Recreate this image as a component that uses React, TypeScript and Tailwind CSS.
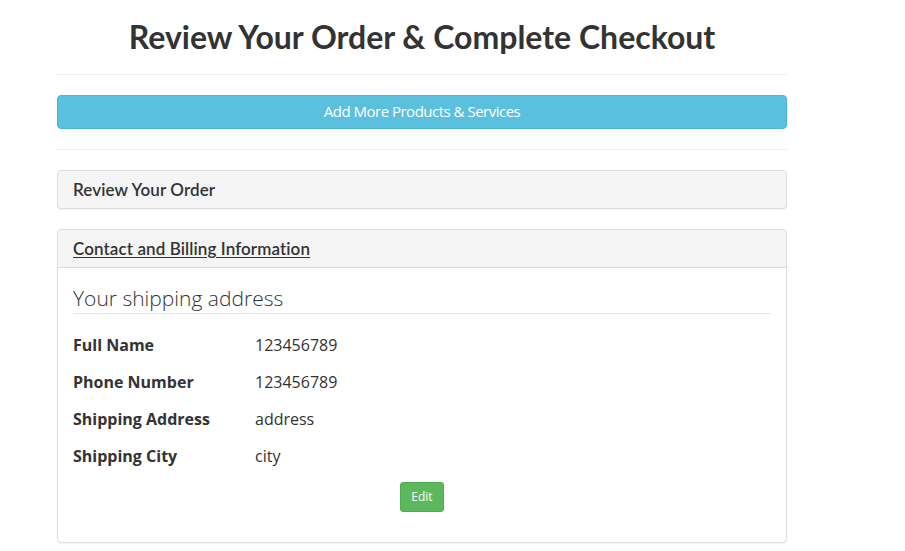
import React from 'react';

const rows = [
  { label: 'Full Name', value: '123456789' },
  { label: 'Phone Number', value: '123456789' },
  { label: 'Shipping Address', value: 'address' },
  { label: 'Shipping City', value: 'city' },
];

const App: React.FC = () => (
  <div className="min-h-screen w-full bg-white font-['Open_Sans',sans-serif] text-[#333]">
    <div className="w-[730px] ml-[57px]">
      <h1 className="pt-[17px] pb-[17px] text-center text-[32px] leading-[40px] font-bold font-['Lato',sans-serif] text-[#333]">
        Review Your Order &amp; Complete Checkout
      </h1>
      <div className="border-t border-[#eee]" />
      <div className="py-5">
        <button className="w-full h-[34px] pb-[2px] rounded bg-[#5bc0de] border border-[#46b8da] text-white text-[15px] tracking-[-0.5px] font-['Liberation_Sans_Narrow','Open_Sans',sans-serif]">
          Add More Products &amp; Services
        </button>
      </div>
      <div className="border-t border-[#eee]" />

      <div className="mt-5 rounded border border-[#ddd] bg-[#f5f5f5] shadow-[0_1px_1px_rgba(0,0,0,0.05)]">
        <div className="h-[37px] px-[15px] flex items-center text-[17px] tracking-[0.1px] font-semibold font-['Lato',sans-serif]">
          Review Your Order
        </div>
      </div>

      <div className="mt-5 rounded border border-[#ddd] bg-white shadow-[0_1px_1px_rgba(0,0,0,0.05)]">
        <div className="h-[38px] px-[15px] flex items-center bg-[#f5f5f5] border-b border-[#ddd] rounded-t text-[17px] tracking-[0.1px] font-semibold underline underline-offset-2 font-['Lato',sans-serif]">
          Contact and Billing Information
        </div>
        <div className="px-[15px] pt-[17px] pb-[30px]">
          <h3 className="text-[21px] leading-[27px] font-light border-b border-[#e5e5e5] pb-[1px]">
            Your shipping address
          </h3>
          <div className="mt-[19px] flex flex-col gap-[13px]">
            {rows.map((r) => (
              <div key={r.label} className="flex text-[16px] leading-6">
                <div className="w-[182px] font-bold">{r.label}</div>
                <div>{r.value}</div>
              </div>
            ))}
          </div>
          <div className="mt-[14px] flex justify-center">
            <button className="h-[30px] px-[10px] rounded-[3px] bg-[#5cb85c] border border-[#4cae4c] text-white text-[12px]">
              Edit
            </button>
          </div>
        </div>
      </div>
    </div>
  </div>
);

export default App;
